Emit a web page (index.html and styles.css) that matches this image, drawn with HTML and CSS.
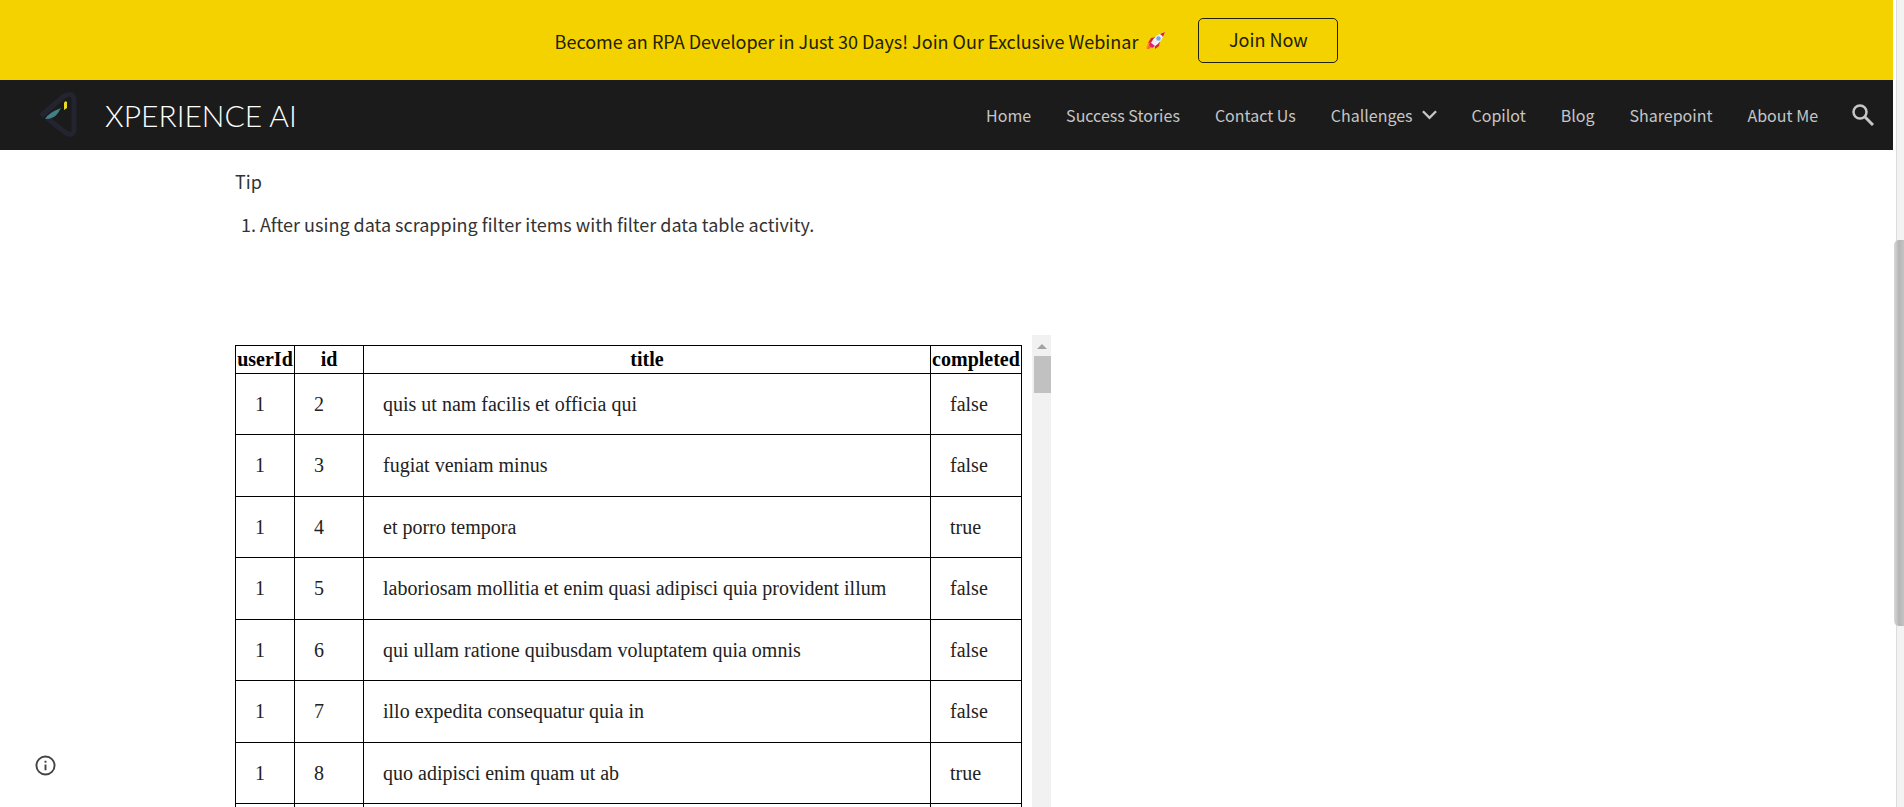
FILE: index.html
```html
<!DOCTYPE html>
<html lang="en">
<head>
<meta charset="utf-8">
<title>Xperience AI</title>
<link rel="stylesheet" href="styles.css">
</head>
<body>
<div class="window">
<div class="page">
  <aside class="banner">
    <p class="banner-text">Become an RPA Developer in Just 30 Days! Join Our Exclusive Webinar
      <svg class="rocket" viewBox="0 0 20 20" aria-hidden="true">
        <path d="M2 12 6 11 4 15 0 18Z" fill="#fb8c24"/>
        <path d="M4 13 7 14 3 18 1 18Z" fill="#ff5a36"/>
        <path d="M10 6 5 7 2 12 7 11ZM14 10 13 15 9 18 9 13Z" fill="#e01e37"/>
        <path d="M5 12Q8 4 19 1 16 11 8 16Z" fill="#eef0f6"/>
        <path d="M14 3 19 1 17 6Q16 4 14 3Z" fill="#d91c2e"/>
        <path d="M4 11 9 15 6 17 3 14Z" fill="#e2207c"/>
        <circle cx="12.500" cy="7.500" r="2.200" fill="#72a9ee"/>
      </svg>
    </p>
    <a class="join" href="#">Join Now</a>
  </aside>
  <header class="header">
    <a class="brand" href="#">
      <svg class="logo" viewBox="0 0 40 48" aria-hidden="true">
        <path d="M3 25 26 5Q35 1 36 8V39Q35 46 28 42L9 27" fill="none" stroke="#22242f" stroke-width="5" stroke-linejoin="round"/>
        <path d="M7 28Q10 22 23 17L20 22Q16 28 7 28Z" fill="#428087"/>
        <path d="M26 12Q27 9 29 11L29 17 26 19Z" fill="#e9db22"/>
      </svg>
      <span class="brand-name">XPERIENCE AI</span>
    </a>
    <nav class="nav">
      <a href="#">Home</a>
      <a href="#">Success Stories</a>
      <a href="#">Contact Us</a>
      <a href="#">Challenges<svg class="chevron" viewBox="0 0 16 10" aria-hidden="true"><path d="M1 1 8 8 15 1" fill="none" stroke="currentColor" stroke-width="2.500"/></svg></a>
      <a href="#">Copilot</a>
      <a href="#">Blog</a>
      <a href="#">Sharepoint</a>
      <a href="#">About Me</a>
    </nav>
    <button class="search" type="button" aria-label="Search">
      <svg viewBox="0 0 22 22" aria-hidden="true"><circle cx="8" cy="8" r="6.500" fill="none" stroke="currentColor" stroke-width="2.500"/><path d="M13 13 21 21" stroke="currentColor" stroke-width="3"/></svg>
    </button>
  </header>
  <main class="content">
    <p class="tip">Tip</p>
    <ol class="tips"><li>After using data scrapping filter items with filter data table activity.</li></ol>
    <div class="embed">
      <table class="todos">
        <colgroup><col class="col-user"><col class="col-id"><col class="col-title"><col class="col-done"></colgroup>
        <thead><tr><th>userId</th><th>id</th><th>title</th><th>completed</th></tr></thead>
        <tbody>
          <tr><td>1</td><td>2</td><td>quis ut nam facilis et officia qui</td><td>false</td></tr>
          <tr><td>1</td><td>3</td><td>fugiat veniam minus</td><td>false</td></tr>
          <tr><td>1</td><td>4</td><td>et porro tempora</td><td>true</td></tr>
          <tr><td>1</td><td>5</td><td>laboriosam mollitia et enim quasi adipisci quia provident illum</td><td>false</td></tr>
          <tr><td>1</td><td>6</td><td>qui ullam ratione quibusdam voluptatem quia omnis</td><td>false</td></tr>
          <tr><td>1</td><td>7</td><td>illo expedita consequatur quia in</td><td>false</td></tr>
          <tr><td>1</td><td>8</td><td>quo adipisci enim quam ut ab</td><td>true</td></tr>
          <tr><td></td><td></td><td></td><td></td></tr>
        </tbody>
      </table>
      <div class="embed-scroll"><div class="arrow"></div><div class="embed-thumb"></div></div>
    </div>
  </main>
  <button class="info" type="button" aria-label="Site information">
    <svg viewBox="0 0 22 22" aria-hidden="true"><circle cx="11" cy="11" r="9.500" fill="none" stroke="currentColor" stroke-width="2"/><path d="M11 10V16M11 6V8" stroke="currentColor" stroke-width="2"/></svg>
  </button>
</div>
<div class="page-scroll"><div class="page-thumb"></div></div>
</div>
</body>
</html>
```
FILE: styles.css
```css
* { box-sizing: border-box; }
body { margin: 0; background: #fff; color: #333; font-family: "Noto Sans CJK SC", "Noto Sans", sans-serif; font-size: 18px; }
a { color: inherit; text-decoration: none; }
button { padding: 0; border: 0; background: none; cursor: pointer; }
svg { display: block; }

.window { display: flex; height: 100vh; overflow: hidden; }
.page { flex: 1; min-width: 0; display: flex; flex-direction: column; position: relative; }

.banner { flex: none; height: 80px; display: flex; align-items: center; justify-content: center; gap: 32px; background: #f4d200; color: #212100; }
.banner-text { margin: 0; padding-top: 2px; display: flex; align-items: center; gap: 8px; white-space: nowrap; }
.rocket { width: 20px; height: 20px; }
.join { width: 140px; height: 45px; border: 1px solid #212100; border-radius: 5px; line-height: 41px; text-align: center; }

.header { flex: none; height: 70px; display: flex; align-items: center; padding: 0 19px 0 38px; background: #1b1b1b; color: #c6c6c6; }
.brand { display: flex; align-items: center; gap: 27px; margin-right: auto; color: #fff; }
.logo { width: 40px; height: 48px; }
.brand-name { font-family: Lato, sans-serif; font-weight: 300; font-size: 30px; line-height: 40px; }
.nav { display: flex; gap: 35px; font-size: 16px; white-space: nowrap; }
.nav a { display: flex; align-items: center; gap: 9px; line-height: 28px; }
.chevron { width: 15px; height: 10px; }
.search { margin-left: 34px; color: #c6c6c6; }
.search svg { width: 22px; height: 22px; }

.content { flex: 1; min-height: 0; overflow: hidden; display: flex; flex-direction: column; padding: 16px 235px 0; }
.tip { margin: 0; line-height: 30px; }
.tips { margin: 13px 0 0; padding-left: 25px; line-height: 30px; }
.embed { flex: 1; min-height: 0; margin-top: 96px; display: flex; gap: 10px; overflow: hidden; }

.todos { flex: none; align-self: flex-start; width: 787px; margin-top: 10px; table-layout: fixed; border-collapse: collapse; color: #000; font-family: "Liberation Serif", serif; font-size: 20px; line-height: 23px; }
.col-user { width: 59px; }
.col-id { width: 69px; }
.col-done { width: 91px; }
.todos th, .todos td { border: 1px solid #000; white-space: nowrap; }
.todos th { height: 28px; padding: 1px; }
.todos td { height: 61px; padding: 0 19px; text-align: left; color: #222; }
.todos tr:nth-child(even) td { height: 62px; }

.embed-scroll { width: 19px; background: #f1f1f1; display: flex; flex-direction: column; align-items: flex-end; }
.arrow { width: 10px; height: 5px; margin: 9px 4px 7px 0; background: #a3a3a3; clip-path: polygon(50% 0, 100% 100%, 0 100%); }
.embed-thumb { width: 17px; height: 37px; background: #c1c1c1; }

.info { position: absolute; left: 35px; bottom: 31px; color: #444; }
.info svg { width: 21px; height: 21px; }

.page-scroll { flex: none; width: 11px; padding: 240px 0 0 1px; background: linear-gradient(90deg, #fff 3px, #dcdcdc 3px, #dcdcdc 4px, #f3f3f3 4px); }
.page-thumb { height: 386px; border-radius: 5px 0 0 5px; background: linear-gradient(90deg, #d8d8d8, #b5b5b5 5px, #c4c4c4); }
```
